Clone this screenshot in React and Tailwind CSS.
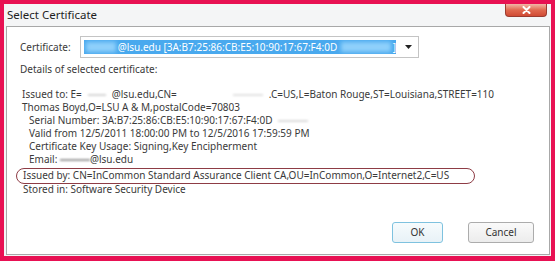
import React from "react";

const Blur = ({ w, cls = "bg-[#c8c8c8]" }) => (
  <span className={`inline-block h-[2px] align-middle blur-[1px] ${cls}`} style={{ width: w }} />
);

export default function App() {
  return (
    <div className="w-[555px] h-[261px] bg-[#e81153] pt-[4px] pl-[4px] pr-[4px] pb-[5px] font-['Noto_Sans',sans-serif] text-[#3a3a3a]">
      <div className="w-full h-full bg-[#f4f5f6] flex flex-col">
        {/* title bar */}
        <div className="h-[22px] flex items-start justify-between relative">
          <div className="pl-[3px] pt-[2px] text-[11.5px] text-[#1e1e1e]">Select Certificate</div>
          <div className="mr-[4px] mt-0 w-[42px] h-[13px] rounded-b-[4px] border border-t-0 border-[#9b3b2f] bg-gradient-to-b from-[#f0b7a6] via-[#e0694f] to-[#d04a34] flex items-center justify-center">
            <svg width="9" height="8" viewBox="0 0 9 8">
              <path d="M1.5 1 L7.5 7 M7.5 1 L1.5 7" stroke="#ffffff" strokeWidth="2" strokeLinecap="round" />
            </svg>
          </div>
        </div>
        {/* panel */}
        <div className="flex-1 ml-[2px] mr-[1px] mb-[1px] border border-[#a8a8a8] bg-white flex flex-col text-[10px] leading-[13px]">
          <div className="flex items-center mt-[9px] pl-[13px]">
            <span className="w-[60px]">Certificate:</span>
            <div className="w-[339px] h-[22px] border border-[#c4c4c4] flex items-center pl-[3px] pr-[6px]">
              <div className="h-[14px] w-[312px] bg-[#49a9ee] text-white flex items-center whitespace-nowrap overflow-hidden">
                <span className="inline-block w-[30px] h-[10px] bg-[#8fd0fb] blur-[2px] ml-[2px] mr-[2px]" />
                <span>@lsu.edu [3A:B7:25:86:CB:E5:10:90:17:67:F4:0D</span>
                <span className="inline-block w-[50px] h-[10px] bg-[#8fd0fb] blur-[2px] ml-[4px] mr-[2px]" />
                <span>]</span>
              </div>
              <svg className="ml-auto" width="7" height="4" viewBox="0 0 7 4">
                <path d="M0 0 L7 0 L3.5 4 Z" fill="#222" />
              </svg>
            </div>
          </div>
          <div className="mt-[2px] pl-[13px] h-[18px] flex items-center">Details of selected certificate:</div>
          <div className="mt-[10px] pl-[15px] whitespace-nowrap">
            Issued to: E=<Blur w={18} cls="bg-[#d6d6d6] mx-[6px]" />@lsu.edu,CN=<Blur w={30} cls="bg-[#e2e2e2] ml-[56px] mr-[6px]" />.C=US,L=Baton Rouge,ST=Louisiana,STREET=110
          </div>
          <div className="pl-[15px] whitespace-nowrap">Thomas Boyd,O=LSU A &amp; M,postalCode=70803</div>
          <div className="pl-[22px] whitespace-nowrap">
            Serial Number: 3A:B7:25:86:CB:E5:10:90:17:67:F4:0D<Blur w={30} cls="bg-[#dcdcdc] ml-[6px]" />
          </div>
          <div className="pl-[22px] whitespace-nowrap">Valid from 12/5/2011 18:00:00 PM to 12/5/2016 17:59:59 PM</div>
          <div className="pl-[22px] whitespace-nowrap">Certificate Key Usage: Signing,Key Encipherment</div>
          <div className="pl-[22px] whitespace-nowrap">
            Email: <Blur w={30} cls="bg-[#9a9a9a]" />@lsu.edu
          </div>
          <div className="mt-[3px] pl-[16px] whitespace-nowrap relative">
            <span className="absolute left-[9px] top-[-1px] w-[459px] h-[16px] rounded-full border border-[#8e3c45]" />
            Issued by: CN=InCommon Standard Assurance Client CA,OU=InCommon,O=Internet2,C=US
          </div>
          <div className="pl-[16px] mt-[1px] whitespace-nowrap">Stored in: Software Security Device</div>
          <div className="mt-auto mb-[11px] flex justify-end gap-[25px] pr-[15px]">
            <button className="w-[51px] h-[21px] border border-[#7ec2df] rounded-[3px] bg-gradient-to-b from-[#f6fbfd] to-[#e8f2f7] text-[10px] text-[#333]">OK</button>
            <button className="w-[66px] h-[21px] border border-[#acacac] rounded-[3px] bg-gradient-to-b from-[#fafafa] to-[#ececec] text-[10px] text-[#333]">Cancel</button>
          </div>
        </div>
      </div>
    </div>
  );
}
